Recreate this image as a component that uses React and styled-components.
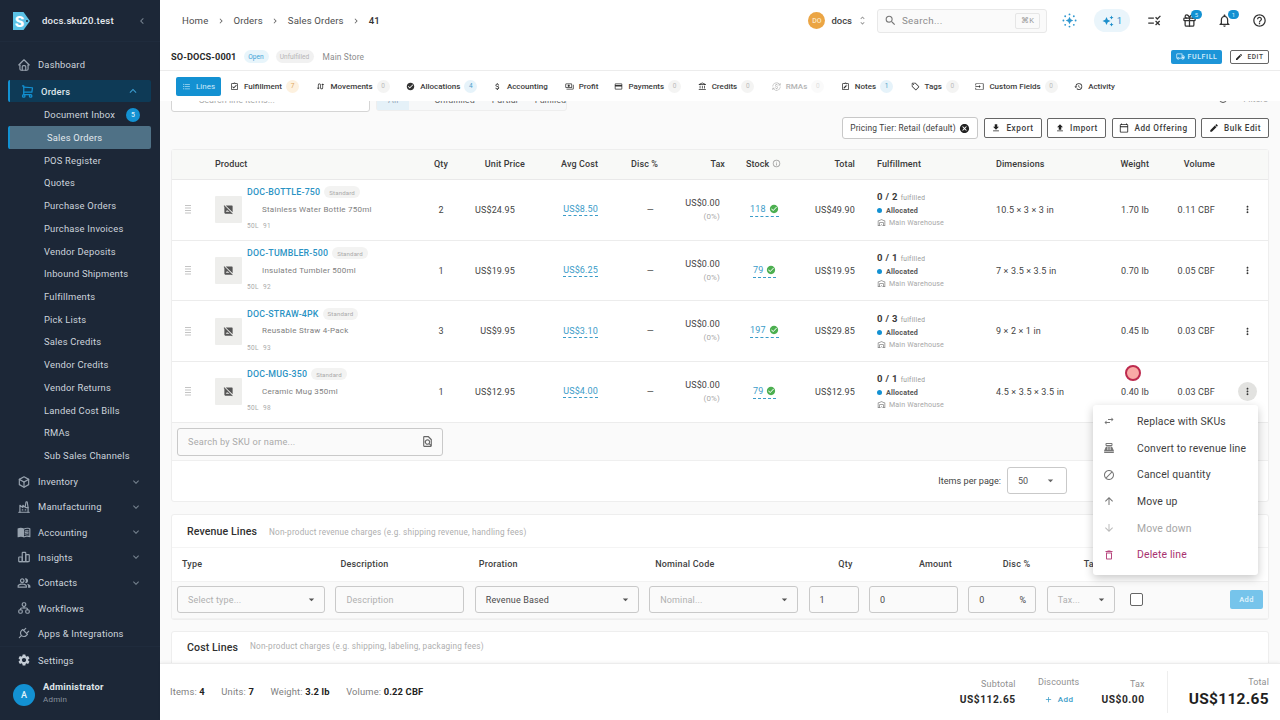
import React from 'react';
import styled, { createGlobalStyle } from 'styled-components';
import {
  MdExpandLess, MdExpandMore, MdOutlineMenuBook, MdOutlinePeopleAlt, MdSettings, MdChevronLeft, MdChevronRight, MdUnfoldMore,
  MdSearch, MdOutlineNotifications, MdHelpOutline, MdRule, MdFormatListBulleted,
  MdOutlineAssignmentTurnedIn, MdCheckCircle, MdAttachMoney, MdOutlineLocalShipping, MdEdit, MdFileDownload, MdFileUpload,
  MdOutlineCalendarToday, MdCancel, MdOutlineInfo, MdMoreVert, MdHideImage, MdOutlineWarehouse, MdSwapHoriz,
  MdSwapCalls, MdBlock, MdArrowUpward, MdArrowDownward, MdOutlineDelete, MdArrowDropDown, MdAdd, MdOutlineFindInPage,
  MdOutlineNoteAlt, MdOutlineSell, MdOutlineHistory, MdOutlineInput, MdOutlineCreditCard, MdOutlineAccountBalance,
  MdOutlinePayments, MdOutlineCurrencyExchange, MdPointOfSale, MdAutoAwesome,
} from 'react-icons/md';
import { TbHome, TbShoppingCart, TbBox, TbBuildingFactory2, TbChartBar, TbSitemap, TbPlug, TbGift } from 'react-icons/tb';

const Global = createGlobalStyle`
  html, body { margin: 0; padding: 0; width: 1280px; height: 720px; overflow: hidden; background: #fff; }
  body { font-family: Roboto, "Liberation Sans", sans-serif; color: #2b2b2b; }
  * { box-sizing: border-box; }
`;

const Shell = styled.div`position: relative; display: flex; width: 1280px; height: 720px; overflow: hidden;`;

/* ---------- sidebar ---------- */
const Sidebar = styled.aside`width: 160px; flex: none; background: #1c2737; color: #d6dce3; display: flex; flex-direction: column; font-size: 9.4px; letter-spacing: .2px;`;
const Brand = styled.div`height: 42px; flex: none; display: flex; align-items: center; padding: 0 12px; margin-bottom: 10.3px; border-bottom: 1px solid #1f2b3c;`;
const BrandName = styled.span`margin-left: 11px; flex: 1; font-size: 9.6px; font-weight: 500; color: #e6ebf0; letter-spacing: .2px;`;
const Nav = styled.nav`display: flex; flex-direction: column; flex: none;`;
const TopItem = styled.div`height: 25.3px; flex: none; display: flex; align-items: center; padding-left: 17px; padding-right: 18px; color: #ced5dd;
  > svg { width: 14px; height: 14px; margin-right: 7px; color: #98a3af; flex: none; }
  span { flex: 1; }`;
const Chevron = styled.i`display: flex; color: #76828f; svg { width: 12px; height: 12px; }`;
const OrdersItem = styled.div`height: 22px; flex: none; margin: 2.5px 9px 1.3px 8px; background: #0e3a56; border-left: 2px solid #1391d2; border-radius: 2px; display: flex; align-items: center; padding: 0 11px 0 10px; font-weight: 500; color: #dfe6ec;
  > svg { width: 15px; height: 15px; margin-right: 6px; color: #1391d2; }
  span { flex: 1; }
  i { display: flex; color: #3b9ccf; } i svg { width: 14px; height: 14px; }`;
const SubItem = styled.div`height: 22.72px; flex: none; display: flex; align-items: center; padding-left: ${p => p.$active ? 37 : 44}px; padding-right: 11px; margin: ${p => p.$active ? '0 9px 0 8px' : '0'}; color: #cdd4dc;
  ${p => p.$active && `background: #4f7186; border-left: 2px solid #1391d2; border-radius: 2px; color: #e3e9ee;`}
  span { flex: 1; }`;
const InboxBadge = styled.b`width: 14px; height: 14px; margin-right: 9px; border-radius: 50%; background: #1391d2; color: #d8eefa; font-size: 7px; font-weight: 500; display: flex; align-items: center; justify-content: center;`;
const Gap = styled.div`height: 2px; flex: none;`;
const SettingsItem = styled(TopItem)`height: 28px; flex: none; border-top: 1px solid #1f2b3c; > svg { color: #c4ccd5; }`;
const UserRow = styled.div`flex: 1; min-height: 0; display: flex; align-items: center; padding: 0 0 9px 13px; gap: 8px;`;
const UserAvatar = styled.div`width: 22px; height: 22px; border-radius: 50%; background: #1391d2; color: #e6f4fb; font-size: 9px; font-weight: 500; margin-top: 5px; display: flex; align-items: center; justify-content: center;`;
const UserName = styled.div`font-size: 9.4px; font-weight: 700; color: #dfe5ea;`;
const UserRole = styled.div`font-size: 8px; color: #87929e; margin-top: 3px;`;

/* ---------- top ---------- */
const Main = styled.main`flex: 1; min-width: 0; display: flex; flex-direction: column; background: #fbfbfa;`;
const TopBar = styled.header`height: 41px; flex: none; background: #fff; display: flex; align-items: center; padding: 0 3px 0 22px;`;
const Crumbs = styled.div`flex: 1; display: flex; align-items: center; font-size: 9.6px; color: #4d4d4d; letter-spacing: .15px;
  svg { width: 10px; height: 10px; margin: 0 7.500px; color: #666; }
  b { font-weight: 500; color: #333; }`;
const Org = styled.div`display: flex; align-items: center; font-size: 9.5px; color: #444; margin-right: 9px; font-weight: 500;
  > svg { width: 11px; height: 11px; color: #999; margin-left: 5px; }`;
const OrgDot = styled.span`width: 17px; height: 17px; border-radius: 50%; background: #eba544; color: #fbe7c7; font-size: 7px; display: flex; align-items: center; justify-content: center; margin-right: 6px;`;
const SearchBox = styled.div`width: 170px; height: 24px; margin-right: 5px; border: 1px solid #e8e8e8; border-radius: 3px; background: #fafafa; display: flex; align-items: center; padding: 0 6px; font-size: 9.8px; color: #8d8d8d; letter-spacing: .3px;
  > svg { width: 13px; height: 13px; color: #777; margin-right: 5px; } span { flex: 1; }`;
const Kbd = styled.kbd`font-family: Roboto, sans-serif; font-size: 7.5px; width: 25px; height: 16px; border: 1px solid #e6e6e6; border-radius: 2px; display: flex; align-items: center; justify-content: center; color: #999; letter-spacing: .5px;`;
const TopIcon = styled.div`position: relative; width: 35px; display: flex; justify-content: center; color: ${p => p.$color || '#333'}; svg { width: 15px; height: 15px; }`;
const AiPill = styled.div`width: 36px; height: 23px; border-radius: 12px; background: #eaf5fb; color: #1d8fcb; margin: 0 7px; display: flex; align-items: center; justify-content: center; gap: 3px; font-size: 9.5px; svg { width: 12px; height: 12px; }`;
const NumBadge = styled.b`position: absolute; top: -3px; right: ${p => p.$r}px; min-width: 11px; height: 9px; border-radius: 5px; background: #1391d2; color: #d6eefb; font-size: 6px; font-weight: 400; display: flex; align-items: center; justify-content: center;`;

const TitleRow = styled.div`height: 30px; flex: none; background: #fff; display: flex; align-items: center; padding: 2px 11px 0; border-bottom: 1px solid #ececec; box-shadow: 0 1px 2px rgba(0,0,0,.03);`;
const OrderNo = styled.strong`font-size: 9.2px; font-weight: 700; color: #2a2a2a; letter-spacing: .1px; margin-right: 7px;`;
const Pill = styled.span`height: 13px; width: ${p => p.$w}px; justify-content: center; border-radius: 7px; background: ${p => p.$bg}; color: ${p => p.$fg}; font-size: 6.6px; display: flex; align-items: center; margin-right: 7px;`;
const Store = styled.span`flex: 1; margin-left: 2px; font-size: 8.4px; color: #8c8c8c; letter-spacing: .15px;`;
const FulfillBtn = styled.button`height: 14px; width: 51px; border: 0; border-radius: 2px; background: #1d95d8; color: #d5eefb; font: 500 7px Roboto, sans-serif; letter-spacing: .6px; display: flex; align-items: center; justify-content: center; gap: 3px; padding: 0; margin-right: 8px; svg { width: 9px; height: 9px; }`;
const EditBtn = styled.button`height: 14px; width: 39px; border: 1px solid #666; border-radius: 2px; background: #fff; color: #444; font: 500 6.6px Roboto, sans-serif; letter-spacing: .6px; display: flex; align-items: center; justify-content: center; gap: 4px; padding: 0; svg { width: 8px; height: 8px; color: #222; }`;

const Tabs = styled.div`height: 30px; flex: none; background: #fff; display: flex; align-items: center; padding-left: 16px; position: relative; z-index: 2;`;
const Tab = styled.div`height: 19px; display: flex; align-items: center; padding: 0 ${p => p.$active ? 6 : 0}px; margin-right: ${p => p.$m}px; border-radius: 2px; font-size: 8px; font-weight: ${p => p.$active ? 400 : 500}; background: ${p => p.$active ? '#1391d2' : 'transparent'}; color: ${p => p.$active ? '#cfeafa' : p.$off ? '#b4b4b4' : '#3c3c3c'};
  svg { width: 9px; height: 9px; margin-right: 5px; color: ${p => p.$active ? '#a9dbf5' : p.$off ? '#bbb' : '#333'}; }`;
const TabCount = styled.span`width: 13px; height: 13px; margin-left: 4px; border-radius: 50%; font-size: 6.5px; font-weight: 400; display: flex; align-items: center; justify-content: center; background: ${p => p.$bg}; color: ${p => p.$fg};`;

/* ---------- scroller ---------- */
const Scroller = styled.div`flex: 1; min-height: 0; overflow: hidden; padding: 0 11px; background: #fafafa;`;
const ClippedRow = styled.div`height: 28px; margin: -17px 0 0; display: flex; align-items: flex-start; color: #aaa; font-size: 9px;`;
const ClippedSearch = styled.div`width: 199px; height: 28px; border: 1px solid #d5d5d5; border-radius: 3px; background: #fff; padding: 10px 0 0 27px;`;
const Segments = styled.div`width: 191px; height: 27px; margin-left: 6px; border: 1px solid #eee; border-radius: 3px; background: #f7f8f9; display: flex; gap: 17px; padding-top: 10px; color: #666;`;
const SegAll = styled.span`width: 33px; background: #e5f1f8; margin: -10px 8px 0 0; padding-top: 10px; text-align: center; color: #9ab;`;
const ClippedFilter = styled.div`margin-left: auto; padding: 10px 1px 0 0; display: flex; align-items: center; gap: 16px; color: #aaa; i { width: 8px; height: 8px; border: 1px solid #555; border-radius: 50%; }`;
const Toolbar = styled.div`height: 20px; margin-top: 6px; display: flex; justify-content: flex-end; gap: 5.5px;`;
const Chip = styled.div`height: 22px; width: 136px; margin: -1px 0 0; border: 1px solid #c8c8c8; border-radius: 3px; background: #fff; display: flex; align-items: center; justify-content: center; gap: 3px; font-size: 8.4px; color: #3e3e3e; letter-spacing: .15px; svg { width: 11px; height: 11px; color: #222; }`;
const OutlineBtn = styled.button`height: 20px; width: ${p => p.$w}px; border: 1px solid #666; border-radius: 2px; background: #fff; color: #3c3c3c; font: 500 8.2px Roboto, sans-serif; letter-spacing: .55px; display: flex; align-items: center; justify-content: center; gap: 5px; padding: 0; svg { width: 10px; height: 10px; color: #222; }`;

const Card = styled.section`margin-top: 11px; border: 1px solid #eeeeee; border-radius: 3px; background: #fff;`;
const cols = '43px 200px 52px 58px 73px 60px 67px 70px 60px 141px 104px 49px 66px 1fr';
const GridRow = styled.div`display: grid; grid-template-columns: ${cols}; align-items: center;`;
const HeadRow = styled(GridRow)`height: 30px; padding-bottom: 2px; background: #f8f9f7; border-bottom: 1px solid #e9e9e9; font-size: 9px; font-weight: 500; color: #3a3a3a; letter-spacing: .1px;`;
const BodyRow = styled(GridRow)`height: 60.7px; border-bottom: 1px solid #ececec; font-size: 9px; color: #444; letter-spacing: .15px;`;
const Cell = styled.div`grid-column: ${p => p.$col}; text-align: ${p => p.$align || 'left'}; padding-left: ${p => p.$pl || 0}px; padding-right: ${p => p.$pr || 0}px; white-space: nowrap;`;
const StockHead = styled.span`display: inline-flex; align-items: center; gap: 3px; svg { width: 9px; height: 9px; color: #999; }`;
const DragCell = styled(Cell)`display: flex; justify-content: center; padding-right: 12px; color: #c4c4c4; svg { width: 6px; height: 9px; }`;
const Product = styled.div`display: flex; align-items: center; gap: 5px;`;
const Thumb = styled.div`width: 27px; height: 27px; background: #eeeeec; border-radius: 1px; display: flex; align-items: center; justify-content: center; color: #555; svg { width: 11px; height: 11px; }`;
const ProdText = styled.div`display: flex; flex-direction: column; margin-bottom: 3.500px;`;
const SkuLine = styled.div`display: flex; align-items: center; gap: 4px; height: 13px;`;
const Sku = styled.span`color: #2b93c4; font-size: 8.8px; font-weight: 500; letter-spacing: .2px;`;
const Std = styled.span`height: 12px; padding: 0 5px; border-radius: 6px; background: #f3f3f2; color: #aaa; font-size: 6.1px; display: flex; align-items: center;`;
const ProdName = styled.div`margin: 5px 0 0 15px; font-size: 8px; color: #808080; letter-spacing: .25px; line-height: 11px;`;
const Lot = styled.div`margin-top: 7.500px; font-size: 6.5px; color: #aaa; letter-spacing: .4px; word-spacing: 2px; line-height: 8px;`;
const Dotted = styled.span`color: #3b9cc8; border-bottom: 1px dashed #3b9cc8; display: inline-flex; align-items: center; gap: 3px; line-height: ${p => p.$stock ? 10 : 12}px; padding: ${p => p.$stock ? '1px 0 2px' : 0}; svg { width: 10px; height: 10px; color: #4caf50; }`;
const TaxCell = styled.div`line-height: 14px; span { display: block; font-size: 8px; color: #aaa; }`;
const Fulfil = styled.div`display: flex; flex-direction: column; gap: 1px;`;
const FulfilTop = styled.div`display: flex; align-items: baseline; gap: 3px; font-size: 9.5px; font-weight: 700; color: #3a3a3a; letter-spacing: .3px; line-height: 11px; small { font-size: 6.6px; font-weight: 400; color: #999; }`;
const Allocated = styled.div`display: flex; align-items: center; gap: 4px; font-size: 7.2px; font-weight: 700; color: #555; line-height: 11px; i { width: 5px; height: 5px; border-radius: 50%; background: #1391d2; }`;
const Warehouse = styled.div`display: flex; align-items: center; gap: 3px; font-size: 7.1px; color: #a8a8a8; line-height: 11px; svg { width: 9px; height: 9px; color: #888; }`;
const KebabBtn = styled.div`width: 19px; height: 19px; margin-left: 23px; border-radius: 50%; display: flex; align-items: center; justify-content: center; color: #333; background: ${p => p.$on ? '#e2e2e0' : 'transparent'}; svg { width: 11px; height: 11px; }`;
const AddRow = styled.div`height: 38px; padding: 5px 5px; background: #fafafa; border-bottom: 1px solid #efefef;`;
const LineSearch = styled.div`width: 266px; height: 28px; border: 1px solid #c9c9c9; border-radius: 3px; background: #fafafa; display: flex; align-items: center; justify-content: space-between; padding: 0 8px 0 10px; font-size: 9.2px; color: #aaa; letter-spacing: .2px; svg { width: 13px; height: 13px; color: #666; }`;
const Pager = styled.div`height: 40px; display: flex; align-items: center; justify-content: flex-end; padding-right: 201px; gap: 6px; font-size: 9.1px; color: #444;`;
const PageSelect = styled.div`width: 60px; height: 27px; border: 1px solid #c9c9c9; border-radius: 3px; display: flex; align-items: center; justify-content: space-between; padding: 0 9px 0 10px; font-size: 9px; color: #555; svg { width: 13px; height: 13px; color: #666; }`;

const RevCard = styled(Card)`margin-top: 12px; background: #fff;`;
const RevTitle = styled.div`height: 33px; display: flex; align-items: center; padding: 2px 0 0 15px; gap: 12px; border-bottom: 1px solid #f4f4f4;`;
const H3 = styled.h3`margin: 0; font-size: 10.6px; font-weight: 500; color: #303030; letter-spacing: .1px;`;
const Hint = styled.span`font-size: 8.2px; color: #aeaeae; letter-spacing: .2px;`;
const revCols = '148px 129px 164px 149px 50px 89px 68px 68px 14px 1fr';
const RevHead = styled.div`height: 34px; display: grid; grid-template-columns: ${revCols}; column-gap: 10.4px; padding: 0 5px; align-items: center; font-size: 9px; font-weight: 500; color: #3f3f3f; letter-spacing: .2px; border-bottom: 1px solid #f2f2f2;`;
const RevCell = styled.div`text-align: ${p => p.$align || 'left'}; padding: 0 ${p => p.$pr || 0}px 0 ${p => p.$pl || 0}px; white-space: nowrap;`;
const RevForm = styled.div`height: 37px; display: grid; grid-template-columns: ${revCols}; column-gap: 10.4px; padding: 0 5px; align-items: center; background: #fafafa; border-bottom: 1px solid #f2f2f2;`;
const Field = styled.div`height: 27px; border: 1px solid #c9c9c9; border-radius: 3px; display: flex; align-items: center; justify-content: space-between; padding: 0 ${p => p.$pr || 6}px 0 10px; font-size: 9px; letter-spacing: .15px; color: ${p => p.$ph ? '#b0b0b0' : '#4a4a4a'}; background: #fafafa; svg { width: 13px; height: 13px; color: #555; }`;
const Check = styled.div`width: 13px; height: 13px; margin-left: 5px; border: 1px solid #666; border-radius: 2px; background: #fff;`;
const AddBtn = styled.button`justify-self: end; width: 33px; height: 19px; border: 0; border-radius: 2px; background: #76c4eb; color: #e3f4fc; font: 500 7.5px Roboto, sans-serif; letter-spacing: .4px; padding: 0;`;
const CostCard = styled(Card)`height: 40px; margin-top: 11px; display: flex; align-items: flex-start; padding: 9px 15px 0; gap: 12px;`;

const Footer = styled.footer`height: 57px; flex: none; background: #fff; border-top: 1px solid #ececec; box-shadow: 0 -1px 3px rgba(0,0,0,.05); display: flex; align-items: center; padding: 0 11px 0 10px; position: relative;`;
const Stats = styled.div`flex: 1; display: flex; gap: 16.5px; font-size: 9.4px; color: #808080; letter-spacing: .15px; margin-top: -1px; b { color: #222; font-weight: 700; }`;
const Sum = styled.div`display: flex; flex-direction: column; align-items: ${p => p.$left ? 'center' : 'flex-end'}; width: ${p => p.$w}px; margin-left: ${p => p.$m}px; gap: ${p => p.$left ? 8 : 5}px; margin-top: ${p => p.$left ? -4 : -1}px;`;
const SumLabel = styled.span`font-size: 9px; color: #909090; letter-spacing: .15px;`;
const SumVal = styled.span`font-size: 10.2px; font-weight: 700; color: #2a2a2a; letter-spacing: .55px;`;
const AddLink = styled.span`display: flex; align-items: center; gap: 5px; color: #3b9cc8; font-size: 8px; font-weight: 500; letter-spacing: .5px; svg { width: 9px; height: 9px; }`;
const TotalBox = styled.div`margin-left: 22px; padding-left: 21px; border-left: 1px solid #eee; height: 42px; display: flex; flex-direction: column; align-items: flex-end; justify-content: center; gap: 3px;`;
const TotalVal = styled.span`font-size: 15.5px; font-weight: 700; color: #1f1f1f; letter-spacing: .3px;`;

/* ---------- overlays ---------- */
const Menu = styled.div`position: absolute; left: 1093px; top: 405px; width: 165px; height: 170px; background: #fff; border-radius: 3px; box-shadow: 0 3px 10px rgba(0,0,0,.22); padding: 3px 0; z-index: 5;`;
const MenuItem = styled.div`height: 26.7px; display: flex; align-items: center; padding-left: 10px; font-size: 10.4px; letter-spacing: .15px; color: ${p => p.$danger ? '#a8326f' : p.$off ? '#a6a6a6' : '#3f3f3f'}; svg { width: 12px; height: 12px; margin-right: 22px; color: ${p => p.$danger ? '#b8487f' : p.$off ? '#bbb' : '#777'}; }`;
const ClickDot = styled.div`position: absolute; left: 1125px; top: 365px; width: 16px; height: 16px; border-radius: 50%; background: #f9aaa6; border: 2px solid #bd2a4e; z-index: 6;`;

const sub = ['Document Inbox', 'Sales Orders', 'POS Register', 'Quotes', 'Purchase Orders', 'Purchase Invoices', 'Vendor Deposits', 'Inbound Shipments', 'Fulfillments', 'Pick Lists', 'Sales Credits', 'Vendor Credits', 'Vendor Returns', 'Landed Cost Bills', 'RMAs', 'Sub Sales Channels'];
const lower = [[TbBox, 'Inventory', 1], [TbBuildingFactory2, 'Manufacturing', 1], [MdOutlineMenuBook, 'Accounting', 1], [TbChartBar, 'Insights', 1], [MdOutlinePeopleAlt, 'Contacts', 1], [TbSitemap, 'Workflows', 0], [TbPlug, 'Apps & Integrations', 0]];
const blue = ['#e6f3fa', '#4c9fca'], grey = ['#f4f4f3', '#bbb'], amber = ['#fdf1df', '#dda95f'];
const tabs = [
  [MdFormatListBulleted, 'Lines', null, 9, { active: true }],
  [MdOutlineAssignmentTurnedIn, 'Fulfillment', ['7', amber], 17.5],
  [MdSwapCalls, 'Movements', ['0', grey], 16.5],
  [MdCheckCircle, 'Allocations', ['4', blue], 15.5],
  [MdAttachMoney, 'Accounting', null, 17],
  [MdOutlinePayments, 'Profit', null, 16],
  [MdOutlineCreditCard, 'Payments', ['0', grey], 16.5],
  [MdOutlineAccountBalance, 'Credits', ['0', grey], 17.5],
  [MdOutlineCurrencyExchange, 'RMAs', ['0', ['#fafafa', '#ddd']], 16.5, { off: true }],
  [MdOutlineNoteAlt, 'Notes', ['1', blue], 17.5],
  [MdOutlineSell, 'Tags', ['0', grey], 16.5],
  [MdOutlineInput, 'Custom Fields', ['0', grey], 16.5],
  [MdOutlineHistory, 'Activity', null, 0],
];
const rows = [
  ['DOC-BOTTLE-750', 'Stainless Water Bottle 750ml', '50L  91', '2', 'US$24.95', 'US$8.50', '118', 'US$49.90', '0 / 2', '10.5 × 3 × 3 in', '1.70 lb', '0.11 CBF'],
  ['DOC-TUMBLER-500', 'Insulated Tumbler 500ml', '50L  92', '1', 'US$19.95', 'US$6.25', '79', 'US$19.95', '0 / 1', '7 × 3.5 × 3.5 in', '0.70 lb', '0.05 CBF'],
  ['DOC-STRAW-4PK', 'Reusable Straw 4-Pack', '50L  93', '3', 'US$9.95', 'US$3.10', '197', 'US$29.85', '0 / 3', '9 × 2 × 1 in', '0.45 lb', '0.03 CBF'],
  ['DOC-MUG-350', 'Ceramic Mug 350ml', '50L  98', '1', 'US$12.95', 'US$4.00', '79', 'US$12.95', '0 / 1', '4.5 × 3.5 × 3.5 in', '0.40 lb', '0.03 CBF'],
];
const menu = [[MdSwapHoriz, 'Replace with SKUs'], [MdPointOfSale, 'Convert to revenue line'], [MdBlock, 'Cancel quantity'], [MdArrowUpward, 'Move up'], [MdArrowDownward, 'Move down', 'off'], [MdOutlineDelete, 'Delete line', 'danger']];

const Logo = () => (
  <svg width="19" height="20" viewBox="0 0 19 20" style={{ flex: 'none' }}>
    <path d="M1 1h10.5L18 10l-6.500 9H1z" fill="#5cc3e6" />
    <circle cx="15" cy="10" r="1" fill="#1c2737" />
    <text x="7.500" y="15.500" textAnchor="middle" fontFamily="Roboto" fontWeight="900" fontSize="15" fill="#fff">S</text>
  </svg>
);
const Spark = () => (
  <svg viewBox="0 0 16 16" fill="currentColor">
    <path d="M8 4 9.300 6.700 12 8 9.300 9.300 8 12 6.700 9.300 4 8 6.700 6.700z" />
    {[[8, 1.500], [8, 14.500], [1.500, 8], [14.500, 8], [3.400, 3.400], [12.600, 3.400], [3.400, 12.600], [12.600, 12.600]].map(([x, y]) => (
      <circle key={`${x}-${y}`} cx={x} cy={y} r="1" />
    ))}
  </svg>
);
const Grip = () => (
  <svg viewBox="0 0 6 9" fill="none" stroke="currentColor" strokeWidth="1">
    <path d="M0 .5h6M0 3h6M0 5.500h6M0 8h6" />
  </svg>
);

export default function App() {
  return (
    <Shell>
      <Global />
      <Sidebar>
        <Brand><Logo /><BrandName>docs.sku20.test</BrandName><Chevron><MdChevronLeft /></Chevron></Brand>
        <Nav>
          <TopItem><TbHome /><span>Dashboard</span></TopItem>
          <OrdersItem><TbShoppingCart /><span>Orders</span><i><MdExpandLess /></i></OrdersItem>
          {sub.map(s => (
            <SubItem key={s} $active={s === 'Sales Orders'}>
              <span>{s}</span>{s === 'Document Inbox' && <InboxBadge>5</InboxBadge>}
            </SubItem>
          ))}
          <Gap />
          {lower.map(([I, t, c]) => (
            <TopItem key={t}><I /><span>{t}</span>{c ? <Chevron><MdExpandMore /></Chevron> : null}</TopItem>
          ))}
        </Nav>
        <SettingsItem><MdSettings /><span>Settings</span></SettingsItem>
        <UserRow>
          <UserAvatar>A</UserAvatar>
          <div><UserName>Administrator</UserName><UserRole>Admin</UserRole></div>
        </UserRow>
      </Sidebar>

      <Main>
        <TopBar>
          <Crumbs>Home<MdChevronRight />Orders<MdChevronRight />Sales Orders<MdChevronRight /><b>41</b></Crumbs>
          <Org><OrgDot>DO</OrgDot>docs<MdUnfoldMore /></Org>
          <SearchBox><MdSearch /><span>Search...</span><Kbd>⌘K</Kbd></SearchBox>
          <TopIcon $color="#2f97cf"><Spark /></TopIcon>
          <AiPill><MdAutoAwesome />1</AiPill>
          <TopIcon><MdRule /></TopIcon>
          <TopIcon><TbGift /><NumBadge $r={5}>5</NumBadge></TopIcon>
          <TopIcon><MdOutlineNotifications /><NumBadge $r={3}>1</NumBadge></TopIcon>
          <TopIcon><MdHelpOutline /></TopIcon>
        </TopBar>
        <TitleRow>
          <OrderNo>SO-DOCS-0001</OrderNo>
          <Pill $bg="#e8f5fb" $fg="#3ea3d6" $w={25}>Open</Pill>
          <Pill $bg="#f1f1f1" $fg="#b5b5b5" $w={38}>Unfulfilled</Pill>
          <Store>Main Store</Store>
          <FulfillBtn><MdOutlineLocalShipping />FULFILL</FulfillBtn>
          <EditBtn><MdEdit />EDIT</EditBtn>
        </TitleRow>
        <Tabs>
          {tabs.map(([I, t, c, m, o]) => (
            <Tab key={t} $m={m} $active={o?.active} $off={o?.off}>
              <I />{t}{c && <TabCount $bg={c[1][0]} $fg={c[1][1]}>{c[0]}</TabCount>}
            </Tab>
          ))}
        </Tabs>
        <Scroller>
          <ClippedRow>
            <ClippedSearch>Search line items...</ClippedSearch>
            <Segments><SegAll>All</SegAll><span>Unfulfilled</span><span>Partial</span><span>Fulfilled</span></Segments>
            <ClippedFilter><i />Filters</ClippedFilter>
          </ClippedRow>
          <Toolbar>
            <Chip>Pricing Tier: Retail (default) <MdCancel /></Chip>
            <OutlineBtn $w={58}><MdFileDownload />Export</OutlineBtn>
            <OutlineBtn $w={59}><MdFileUpload />Import</OutlineBtn>
            <OutlineBtn $w={84}><MdOutlineCalendarToday />Add Offering</OutlineBtn>
            <OutlineBtn $w={68}><MdEdit />Bulk Edit</OutlineBtn>
          </Toolbar>
          <Card>
            <HeadRow>
              <Cell $col={2}>Product</Cell>
              <Cell $col={3} $align="center">Qty</Cell>
              <Cell $col={4} $align="right">Unit Price</Cell>
              <Cell $col={5} $align="right">Avg Cost</Cell>
              <Cell $col={6} $align="right">Disc %</Cell>
              <Cell $col={7} $align="right">Tax</Cell>
              <Cell $col={8} $pl={21}><StockHead>Stock <MdOutlineInfo /></StockHead></Cell>
              <Cell $col={9} $align="right">Total</Cell>
              <Cell $col={10} $pl={22}>Fulfillment</Cell>
              <Cell $col={11}>Dimensions</Cell>
              <Cell $col={12} $align="right">Weight</Cell>
              <Cell $col={13} $align="right">Volume</Cell>
            </HeadRow>
            {rows.map((r, i) => (
              <BodyRow key={r[0]}>
                <DragCell $col={1}><Grip /></DragCell>
                <Cell $col={2}>
                  <Product>
                    <Thumb><MdHideImage /></Thumb>
                    <ProdText>
                      <SkuLine><Sku>{r[0]}</Sku><Std>Standard</Std></SkuLine>
                      <ProdName>{r[1]}</ProdName>
                      <Lot>{r[2]}</Lot>
                    </ProdText>
                  </Product>
                </Cell>
                <Cell $col={3} $align="center">{r[3]}</Cell>
                <Cell $col={4} $align="right" $pr={10}>{r[4]}</Cell>
                <Cell $col={5} $align="right"><Dotted>{r[5]}</Dotted></Cell>
                <Cell $col={6} $align="right" $pr={4}>—</Cell>
                <Cell $col={7} $align="right" $pr={5}><TaxCell>US$0.00<span>(0%)</span></TaxCell></Cell>
                <Cell $col={8} $pl={r[6].length === 3 ? 25 : 28}><Dotted $stock>{r[6]}<MdCheckCircle /></Dotted></Cell>
                <Cell $col={9} $align="right">{r[7]}</Cell>
                <Cell $col={10} $pl={22}>
                  <Fulfil>
                    <FulfilTop>{r[8]} <small>fulfilled</small></FulfilTop>
                    <Allocated><i />Allocated</Allocated>
                    <Warehouse><MdOutlineWarehouse /> Main Warehouse</Warehouse>
                  </Fulfil>
                </Cell>
                <Cell $col={11}>{r[9]}</Cell>
                <Cell $col={12} $align="right">{r[10]}</Cell>
                <Cell $col={13} $align="right">{r[11]}</Cell>
                <Cell $col={14}><KebabBtn $on={i === 3}><MdMoreVert /></KebabBtn></Cell>
              </BodyRow>
            ))}
            <AddRow><LineSearch>Search by SKU or name...<MdOutlineFindInPage /></LineSearch></AddRow>
            <Pager>Items per page:<PageSelect>50<MdArrowDropDown /></PageSelect></Pager>
          </Card>
          <RevCard>
            <RevTitle><H3>Revenue Lines</H3><Hint>Non-product revenue charges (e.g. shipping revenue, handling fees)</Hint></RevTitle>
            <RevHead>
              <RevCell $pl={5}>Type</RevCell>
              <RevCell $pl={5}>Description</RevCell>
              <RevCell $pl={4}>Proration</RevCell>
              <RevCell $pl={6}>Nominal Code</RevCell>
              <RevCell $align="right" $pr={6}>Qty</RevCell>
              <RevCell $align="right" $pr={6}>Amount</RevCell>
              <RevCell $align="right" $pr={6}>Disc %</RevCell>
              <RevCell $pl={37}>Tax</RevCell>
            </RevHead>
            <RevForm>
              <Field $ph>Select type...<MdArrowDropDown /></Field>
              <Field $ph>Description</Field>
              <Field>Revenue Based<MdArrowDropDown /></Field>
              <Field $ph>Nominal...<MdArrowDropDown /></Field>
              <Field>1</Field>
              <Field>0</Field>
              <Field $pr={9}>0<span>%</span></Field>
              <Field $ph>Tax...<MdArrowDropDown /></Field>
              <Check />
              <AddBtn>Add</AddBtn>
            </RevForm>
          </RevCard>
          <CostCard><H3>Cost Lines</H3><Hint>Non-product charges (e.g. shipping, labeling, packaging fees)</Hint></CostCard>
        </Scroller>
        <Footer>
          <Stats>
            <span>Items: <b>4</b></span><span>Units: <b>7</b></span><span>Weight: <b>3.2 lb</b></span><span>Volume: <b>0.22 CBF</b></span>
          </Stats>
          <Sum $w={60}><SumLabel>Subtotal</SumLabel><SumVal>US$112.65</SumVal></Sum>
          <Sum $w={44} $m={21} $left><SumLabel>Discounts</SumLabel><AddLink><MdAdd />Add</AddLink></Sum>
          <Sum $w={50} $m={14}><SumLabel>Tax</SumLabel><SumVal>US$0.00</SumVal></Sum>
          <TotalBox><SumLabel>Total</SumLabel><TotalVal>US$112.65</TotalVal></TotalBox>
        </Footer>
      </Main>

      <ClickDot />
      <Menu>
        {menu.map(([I, t, k]) => (
          <MenuItem key={t} $off={k === 'off'} $danger={k === 'danger'}><I />{t}</MenuItem>
        ))}
      </Menu>
    </Shell>
  );
}
